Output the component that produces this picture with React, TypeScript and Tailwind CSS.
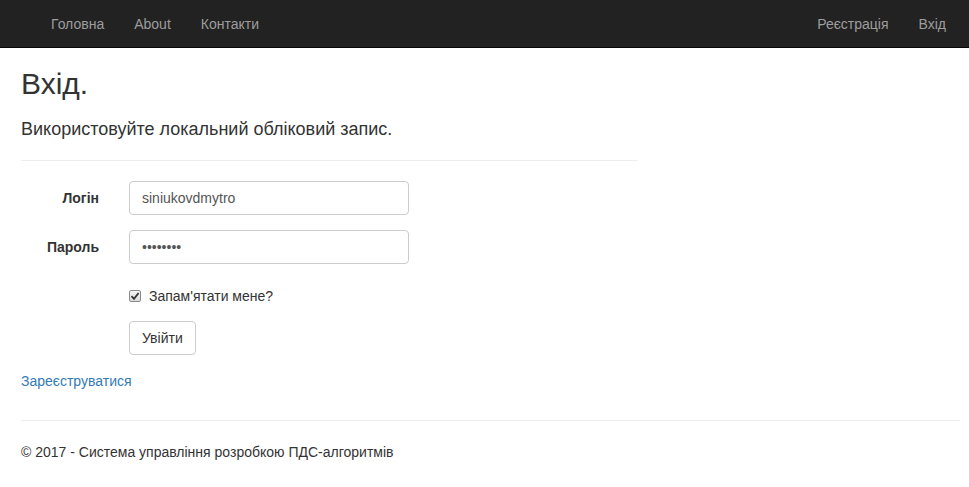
import React from 'react'

const font = { fontFamily: '"Liberation Sans", Arial, sans-serif' }

function NavLink({ children }: { children: React.ReactNode }) {
  return <a className="text-[14px] text-[#9d9d9d] leading-[20px] px-[15px] py-[14px]">{children}</a>
}

export default function App() {
  return (
    <div className="min-h-[487px] bg-white text-[#333] text-[14px] leading-[20px]" style={font}>
      {/* Navbar */}
      <nav className="h-[48px] bg-[#222] border-b border-[#080808] flex items-center justify-between pl-[36px] pr-[8px]">
        <div className="flex items-center">
          <NavLink>Головна</NavLink>
          <NavLink>About</NavLink>
          <NavLink>Контакти</NavLink>
        </div>
        <div className="flex items-center">
          <NavLink>Реєстрація</NavLink>
          <NavLink>Вхід</NavLink>
        </div>
      </nav>

      <div className="px-[21px] w-[961px]">
        <h2 className="mt-[19px] text-[30px] leading-[33px] font-normal">Вхід.</h2>
        <h4 className="mt-[19px] text-[18px] leading-[20px]">Використовуйте локальний обліковий запис.</h4>
        <hr className="mt-[21px] w-[617px] border-t border-[#eee]" />

        {/* Form */}
        <div className="mt-[20px] flex flex-col gap-[15px]">
          <div className="flex items-center">
            <label className="w-[78px] text-right font-bold">Логін</label>
            <input
              className="ml-[30px] w-[280px] h-[34px] px-[12px] border border-[#ccc] rounded-[4px] text-[#555] text-[14px] outline-none"
              style={font}
              defaultValue="siniukovdmytro"
            />
          </div>
          <div className="flex items-center">
            <label className="w-[78px] text-right font-bold">Пароль</label>
            <input
              type="password"
              className="ml-[30px] w-[280px] h-[34px] px-[12px] border border-[#ccc] rounded-[4px] text-[#555] text-[14px] outline-none"
              style={font}
              defaultValue="password"
            />
          </div>
        </div>

        <div className="mt-[22px] ml-[108px] flex items-center gap-[8px]">
          <span className="w-[12px] h-[12px] border border-[#8a8a8a] rounded-[2px] bg-gradient-to-b from-[#f4f4f4] to-[#dcdcdc] flex items-center justify-center">
            <svg width="10" height="10" viewBox="0 0 10 10">
              <path d="M1.5 5.2 L4 7.8 L8.6 2" fill="none" stroke="#333" strokeWidth="1.8" />
            </svg>
          </span>
          <span>Запам'ятати мене?</span>
        </div>

        <div className="mt-[15px] ml-[108px]">
          <button className="h-[34px] px-[12px] border border-[#ccc] rounded-[4px] bg-white text-[#333] text-[14px]" style={font}>
            Увійти
          </button>
        </div>

        <div className="mt-[16px]">
          <a className="text-[#337ab7]">Зареєструватися</a>
        </div>

        <hr className="mt-[29px] w-[939px] border-t border-[#eee]" />
        <footer className="mt-[21px]">
          <p>© 2017 - Система управління розробкою ПДС-алгоритмів</p>
        </footer>
      </div>
    </div>
  )
}
